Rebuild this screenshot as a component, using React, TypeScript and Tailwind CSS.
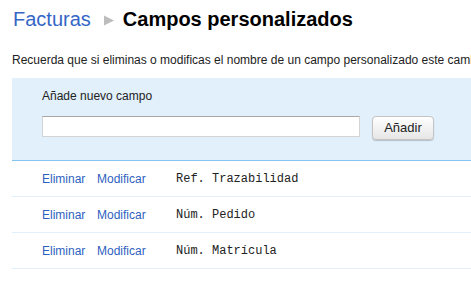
import React from "react";

const rows = ["Ref. Trazabilidad", "Núm. Pedido", "Núm. Matrícula"];

export default function App() {
  return (
    <div className="w-[471px] h-[285px] overflow-hidden bg-white pl-3 font-['Liberation_Sans',Arial,sans-serif]">
      <div className="w-[700px]">
        <div className="flex items-center h-[23px] mt-[8px] text-[20px] leading-[23px]">
          <span className="text-[#3466c6] ml-[1px]">Facturas</span>
          <svg width="11" height="11" viewBox="0 0 11 11" className="ml-[13px] mr-[8px] mt-[1px]">
            <polygon points="0,0.5 10,5.5 0,10.5" fill="#bdbdbd" />
          </svg>
          <span className="font-bold text-black">Campos personalizados</span>
        </div>
        <p className="mt-[21px] text-[12px] leading-[16px] text-[#222] whitespace-nowrap">
          Recuerda que si eliminas o modificas el nombre de un campo personalizado este cambiará en todas las facturas
        </p>
        <div className="mt-[10px] h-[83px] bg-[#e1f0fb] border-b border-[#84c4f0] pl-[30px] pt-[10px]">
          <div className="text-[12px] leading-[16px] text-[#222]">Añade nuevo campo</div>
          <div className="flex items-start mt-[12px]">
            <input
              type="text"
              className="w-[318px] h-[21px] bg-white border border-[#d4d4d4] border-t-[#a8a8a8] outline-none"
            />
            <button className="ml-[12px] w-[62px] h-[24px] rounded-[4px] border border-[#c4c4c4] bg-gradient-to-b from-white to-[#e6e6e6] shadow-[0_1px_1px_rgba(0,0,0,0.2)] text-[13px] text-[#222]">
              Añadir
            </button>
          </div>
        </div>
        {rows.map((r) => (
          <div key={r} className="flex items-center h-[36px] border-b border-[#e3effa] pl-[30px] text-[12px]">
            <span className="text-[#2f5fc0] w-[55px]">Eliminar</span>
            <span className="text-[#2f5fc0] w-[79px]">Modificar</span>
            <span className="font-['Liberation_Mono','Courier_New',monospace] text-[12px] text-[#222]">{r}</span>
          </div>
        ))}
      </div>
    </div>
  );
}
